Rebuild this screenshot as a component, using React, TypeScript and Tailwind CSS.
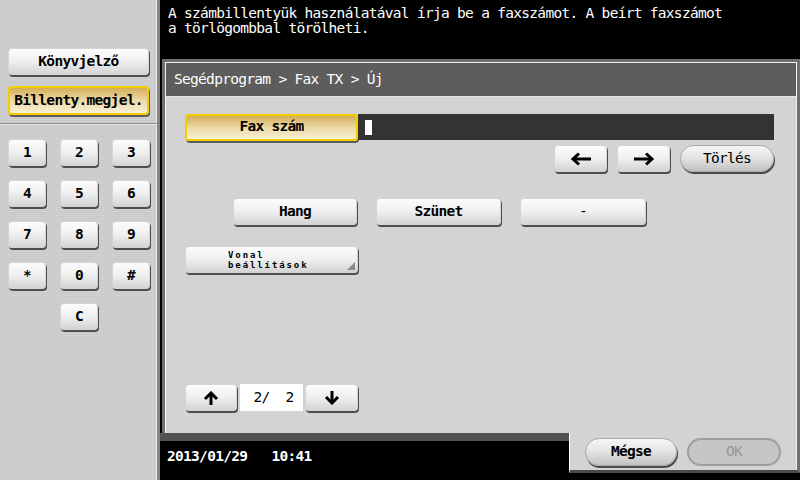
import React from "react";

const grayBtn =
	"flex items-center justify-center rounded-[4px] border border-[#d4d4d4] bg-linear-to-b from-[#fdfdfd] via-[#efefef] to-[#d4d4d4] shadow-[1px_2px_0_#4e4e4e] font-bold text-black";
const yellowBtn =
	"flex items-center justify-center rounded-[4px] border-2 border-[#f2cd00] bg-linear-to-b from-[#d4ae58] via-[#ecd9a4] to-[#f8f0d6] shadow-[1px_2px_0_#5c5c5c] font-bold text-black";
const pillBtn =
	"flex items-center justify-center rounded-full border border-[#a8a8a8] bg-linear-to-b from-[#f6f6f6] via-[#e2e2e2] to-[#c2c2c2] shadow-[1px_2px_0_#4a4a4a] font-bold text-black";

const ArrowLeft = () => (
	<svg width="22" height="14" viewBox="0 0 22 14">
		<path d="M3 7H21" stroke="#000" strokeWidth="3" fill="none" />
		<path d="M9 1.5L3 7L9 12.5" stroke="#000" strokeWidth="3" fill="none" />
	</svg>
);

const ArrowRight = () => (
	<svg width="22" height="14" viewBox="0 0 22 14">
		<path d="M1 7H19" stroke="#000" strokeWidth="3" fill="none" />
		<path d="M13 1.5L19 7L13 12.5" stroke="#000" strokeWidth="3" fill="none" />
	</svg>
);

const ArrowUp = () => (
	<svg width="16" height="14" viewBox="0 0 16 14">
		<path d="M8 2.5V14" stroke="#000" strokeWidth="3" fill="none" />
		<path d="M2 8L8 2L14 8" stroke="#000" strokeWidth="3" fill="none" />
	</svg>
);

const ArrowDown = () => (
	<svg width="16" height="14" viewBox="0 0 16 14">
		<path d="M8 0V11.5" stroke="#000" strokeWidth="3" fill="none" />
		<path d="M2 6L8 12L14 6" stroke="#000" strokeWidth="3" fill="none" />
	</svg>
);

const keys = ["1", "2", "3", "4", "5", "6", "7", "8", "9", "*", "0", "#"];

const Sidebar: React.FC = () => (
	<div className="flex h-full w-[160px] flex-col border-r-[3px] border-[#858585] bg-[repeating-linear-gradient(180deg,#c9c9c9_0px,#c9c9c9_1px,#d1d1d1_1px,#d1d1d1_2px)] shadow-[inset_-1px_0_0_#eeeeee] pt-[48px]">
		<div className="flex flex-col gap-[11px] px-[8px]">
			<div className={`${grayBtn} h-[27px] w-[141px]`}>Könyvjelző</div>
			<div className={`${yellowBtn} h-[29px] w-[141px]`}>Billenty.megjel.</div>
		</div>
		<div className="mt-[8px] h-[2px] w-full border-t border-[#8e8e8e] bg-[#e6e6e6]" />
		<div className="mt-[14px] grid grid-cols-[38px_38px_38px] gap-x-[14px] gap-y-[14px] px-[8px]">
			{keys.map((k) => (
				<div key={k} className={`${grayBtn} h-[27px]`}>
					{k}
				</div>
			))}
			<div />
			<div className={`${grayBtn} h-[27px]`}>C</div>
		</div>
	</div>
);

export default function App() {
	return (
		<div className="flex h-[480px] w-[800px] overflow-hidden bg-black font-['DejaVu_Sans_Mono',monospace] text-[14.5px] tracking-[-0.7px]">
			<Sidebar />
			<div className="flex flex-1 flex-col">
				<div className="h-[59px] pl-[8px] pt-[6px] leading-[15px] text-white">
					<div>A számbillentyük használatával írja be a faxszámot. A beírt faxszámot</div>
					<div>a törlögombbal törölheti.</div>
				</div>
				<div className="ml-[2px] border-[3px] border-b-0 border-[#6f6f6f] bg-[#d3d3d3]">
					<div className="border-x border-t border-[#f2f2f2]">
						<div className="flex h-[34px] items-center border-b border-[#e4e4e4] bg-[#5d5d5d] pl-[8px] text-white">
							Segédprogram &gt; Fax TX &gt; Új
						</div>
						<div className="flex h-[336px] flex-col pl-[19px] pr-[22px] pt-[16px]">
							<div className="flex h-[28px] items-center">
								<div className={`${yellowBtn} h-[27px] w-[173px]`}>Fax szám</div>
								<div className="flex h-[26px] flex-1 items-center bg-[#333333] pl-[7px]">
									<div className="h-[15px] w-[7px] bg-white" />
								</div>
							</div>
							<div className="mt-[4px] flex h-[29px] justify-end gap-[10px]">
								<div className={`${grayBtn} h-[27px] w-[53px]`}>
									<ArrowLeft />
								</div>
								<div className={`${grayBtn} h-[27px] w-[53px]`}>
									<ArrowRight />
								</div>
								<div className={`${pillBtn} h-[27px] w-[94px] font-normal`}>Törlés</div>
							</div>
							<div className="mt-[24px] flex h-[29px] gap-[19px] pl-[48px]">
								<div className={`${grayBtn} h-[27px] w-[124px]`}>Hang</div>
								<div className={`${grayBtn} h-[27px] w-[125px]`}>Szünet</div>
								<div className={`${grayBtn} h-[27px] w-[126px] font-normal`}>-</div>
							</div>
							<div className="mt-[19px] flex h-[29px]">
								<div className={`${grayBtn} relative h-[27px] w-[173px] flex-col items-start pl-[42px] pt-[1px] text-[9px] leading-[10px] tracking-[1.9px]`}>
									<span>Vonal</span>
									<span>beállítások</span>
									<span className="absolute bottom-[2px] right-[2px] h-0 w-0 border-b-[8px] border-l-[8px] border-b-[#8c8c8c] border-l-transparent" />
								</div>
							</div>
							<div className="mt-[109px] flex h-[29px] items-start">
								<div className={`${grayBtn} h-[27px] w-[52px]`}>
									<ArrowUp />
								</div>
								<div className="ml-[3px] flex h-[27px] w-[63px] items-center justify-center bg-white pl-[4px] whitespace-pre text-black">
									2/  2
								</div>
								<div className={`${grayBtn} ml-[2px] h-[27px] w-[53px]`}>
									<ArrowDown />
								</div>
							</div>
						</div>
					</div>
				</div>
				<div className="flex h-[47px]">
					<div className="w-[409px] border-t-[8px] border-[#525252] pl-[7px] pt-[5px] font-bold whitespace-pre text-white">
						2013/01/29   10:41
					</div>
					<div className="flex h-[40px] flex-1 gap-[10px] border-b-[3px] border-l border-r-[3px] border-b-[#4a4a4a] border-l-white border-r-[#6f6f6f] bg-[#d3d3d3] pl-[15px] pt-[5px] shadow-[inset_-1px_0_0_#f2f2f2]">
						<div className={`${pillBtn} h-[28px] w-[92px]`}>Mégse</div>
						<div className="flex h-[28px] w-[94px] items-center justify-center rounded-full border-2 border-[#9e9e9e] bg-[#c5c5c5] text-[#979797]">
							OK
						</div>
					</div>
				</div>
			</div>
		</div>
	);
}
